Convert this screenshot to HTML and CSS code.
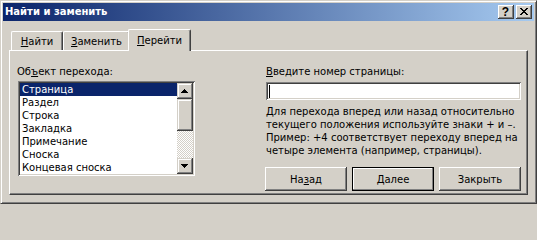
FILE: index.html
```html
<!DOCTYPE html>
<html lang="ru">
<head>
<meta charset="utf-8">
<title>Найти и заменить</title>
<link rel="stylesheet" href="styles.css">
</head>
<body>
<div class="window">
  <div class="titlebar">
    <span class="title">Найти и заменить</span>
    <div class="caption-buttons">
      <span class="cbtn help">?</span>
      <span class="cbtn close"><svg width="8" height="7" viewBox="0 0 8 7" shape-rendering="crispEdges"><path d="M0 0h2v1H0zM6 0h2v1H6zM1 1h2v1H1zM5 1h2v1H5zM2 2h4v1H2zM3 3h2v1H3zM2 4h4v1H2zM1 5h2v1H1zM5 5h2v1H5zM0 6h2v1H0zM6 6h2v1H6z" fill="#000"/></svg></span>
    </div>
  </div>
  <div class="client">
    <div class="tabs">
      <div class="tab t1"><u>Н</u>айти</div>
      <div class="tab t2"><u>З</u>аменить</div>
      <div class="tab t3 active"><u>П</u>ерейти</div>
    </div>
    <div class="panel">
      <div class="col-left">
        <div class="label">Об<u>ъ</u>ект перехода:</div>
        <div class="listbox">
          <ul class="items">
            <li class="sel">Страница</li>
            <li>Раздел</li>
            <li>Строка</li>
            <li>Закладка</li>
            <li>Примечание</li>
            <li>Сноска</li>
            <li>Концевая сноска</li>
          </ul>
          <div class="scrollbar">
            <div class="sbtn"><svg width="7" height="4" viewBox="0 0 7 4" shape-rendering="crispEdges"><path d="M3 0h1v1H3zM2 1h3v1H2zM1 2h5v1H1zM0 3h7v1H0z" fill="#000"/></svg></div>
            <div class="thumb"></div>
            <div class="track"></div>
            <div class="sbtn"><svg width="7" height="4" viewBox="0 0 7 4" shape-rendering="crispEdges"><path d="M0 0h7v1H0zM1 1h5v1H1zM2 2h3v1H2zM3 3h1v1H3z" fill="#000"/></svg></div>
          </div>
        </div>
      </div>
      <div class="col-right">
        <div class="label"><u>В</u>ведите номер страницы:</div>
        <div class="edit"><span class="caret"></span></div>
        <p class="hint">Для перехода вперед или назад относительно<br>текущего положения используйте знаки + и –.<br>Пример: +4 соответствует переходу вперед на<br>четыре элемента (например, страницы).</p>
        <div class="buttons">
          <button class="btn">На<u>з</u>ад</button>
          <button class="btn default"><u>Д</u>алее</button>
          <button class="btn">Закрыть</button>
        </div>
      </div>
    </div>
  </div>
</div>
</body>
</html>
```

FILE: styles.css
```css
* { box-sizing: border-box; }

body {
  margin: 0;
  background: #d4d0c8;
  font: 10px/13px "DejaVu Sans", Verdana, sans-serif;
  color: #000;
}

u { text-underline-offset: 1px; }

.window {
  width: 537px;
  height: 204px;
  background: #d4d0c8;
  border: 1px solid;
  border-color: #d4d0c8 #404040 #404040 #d4d0c8;
  box-shadow: inset 1px 1px #fff, inset -1px -1px #808080;
  padding: 2px;
  display: flex;
  flex-direction: column;
}

.titlebar {
  height: 18px;
  flex: none;
  display: flex;
  align-items: center;
  padding: 0 2px;
  background: linear-gradient(to right, #0a246a, #a6caf0);
}

.title {
  color: #fff;
  font-weight: bold;
  font-size: 10px;
  line-height: 18px;
}

.caption-buttons {
  margin-left: auto;
  display: flex;
  gap: 2px;
}

.cbtn {
  width: 16px;
  height: 14px;
  background: #d4d0c8;
  box-shadow: inset -1px -1px #404040, inset 1px 1px #fff, inset -2px -2px #808080;
  display: flex;
  align-items: center;
  justify-content: center;
  padding: 0 1px 1px 0;
}

.help {
  font-weight: bold;
  font-size: 12px;
  line-height: 12px;
  font-family: "Liberation Sans", Arial, sans-serif;
}

.client {
  flex: 1;
  display: flex;
  flex-direction: column;
  padding: 8px 6px 6px 6px;
}

.tabs {
  height: 21px;
  flex: none;
  display: flex;
  align-items: flex-end;
  padding-left: 2px;
}

.tab {
  height: 19px;
  background: #d4d0c8;
  border-left: 1px solid #fff;
  border-top: 1px solid #fff;
  border-right: 1px solid #404040;
  border-radius: 2px 2px 0 0;
  box-shadow: inset -1px 0 #808080;
  text-align: center;
  padding-top: 3px;
}

.t1 { width: 52px; }
.t2 { width: 67px; }

.tab.active {
  width: 63px;
  height: 22px;
  margin: 0 -2px -1px -2px;
  padding-top: 4px;
  position: relative;
  z-index: 1;
}

.panel {
  flex: 1;
  display: flex;
  gap: 70px;
  border-left: 1px solid #fff;
  border-top: 1px solid #fff;
  border-right: 1px solid #404040;
  border-bottom: 1px solid #404040;
  box-shadow: inset -1px -1px #808080;
  padding: 14px 5px 0 7px;
}

.col-left {
  width: 179px;
  display: flex;
  flex-direction: column;
}

.col-right {
  width: 255px;
  display: flex;
  flex-direction: column;
}

.label { height: 13px; white-space: nowrap; }

.listbox {
  margin: 3px 0 0 1px;
  width: 177px;
  height: 95px;
  background: #fff;
  box-shadow: inset 1px 1px #808080, inset -1px -1px #fff, inset 2px 2px #404040, inset -2px -2px #d4d0c8;
  padding: 2px;
  display: flex;
}

.items {
  flex: 1;
  list-style: none;
  margin: 0;
  padding: 0;
}

.items li {
  height: 13px;
  padding-left: 2px;
  white-space: nowrap;
}

.items li.sel {
  background: #0a246a;
  color: #fff;
}

.scrollbar {
  width: 16px;
  display: flex;
  flex-direction: column;
}

.sbtn, .thumb {
  background: #d4d0c8;
  box-shadow: inset -1px -1px #404040, inset 1px 1px #d4d0c8, inset -2px -2px #808080, inset 2px 2px #fff;
}

.sbtn {
  height: 16px;
  display: flex;
  align-items: center;
  justify-content: center;
  padding: 0 1px 0 0;
}

.thumb { height: 32px; }

.track {
  flex: 1;
  background: repeating-conic-gradient(#fff 0 25%, #d4d0c8 0 50%) 0 0 / 2px 2px;
}

.edit {
  margin-top: 4px;
  height: 18px;
  background: #fff;
  box-shadow: inset 1px 1px #808080, inset -1px -1px #fff, inset 2px 2px #404040, inset -2px -2px #d4d0c8;
  padding: 3px 0 0 3px;
}

.caret {
  display: block;
  width: 1px;
  height: 13px;
  background: #000;
}

.hint {
  margin: 5px 0 0 0;
  white-space: nowrap;
}

.buttons {
  margin: 10px 0 0 -1px;
  display: flex;
  gap: 5px;
}

.btn {
  width: 82px;
  height: 24px;
  font: inherit;
  color: #000;
  background: #d4d0c8;
  border: none;
  padding: 0;
  box-shadow: inset -1px -1px #404040, inset 1px 1px #fff, inset -2px -2px #808080;
}

.btn.default {
  border: 1px solid #000;
  box-shadow: inset -1px -1px #808080, inset 1px 1px #fff;
}
```
